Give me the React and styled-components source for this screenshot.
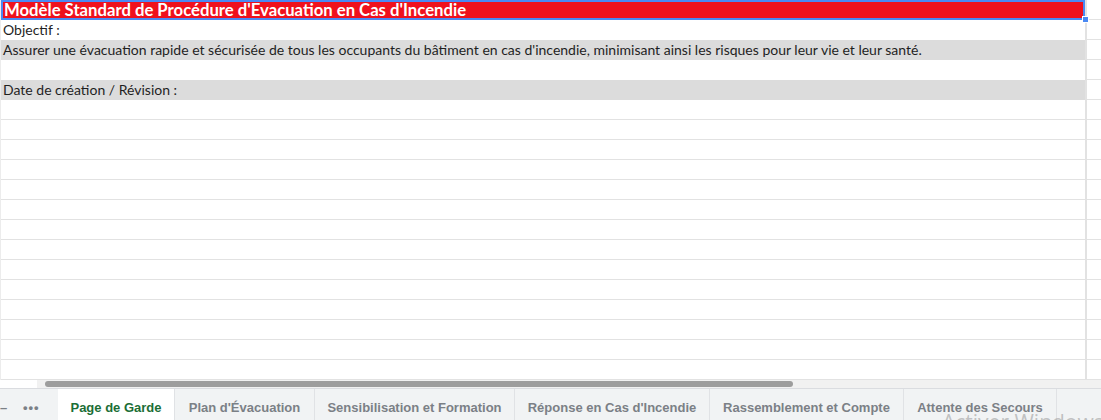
import React from 'react'
import styled, { createGlobalStyle } from 'styled-components'

const GlobalStyle = createGlobalStyle`
    html, body {
        margin: 0;
        padding: 0;
        width: 1101px;
        height: 420px;
        overflow: hidden;
        background: #ffffff;
    }
    * { box-sizing: border-box; }
`

const Screen = styled.div`
    position: relative;
    display: flex;
    flex-direction: column;
    width: 1101px;
    height: 420px;
    overflow: hidden;
`

const Grid = styled.div`
    display: flex;
    flex-direction: column;
    border-left: 1px solid #ececec;
`

const Row = styled.div`
    display: grid;
    grid-template-columns: 1084px 1fr;
    height: 20px;
`

const MainCell = styled.div`
    position: relative;
    height: 20px;
    padding: 0 2px;
    display: flex;
    align-items: flex-end;
    font-family: Lato, "Open Sans", sans-serif;
    font-size: 14px;
    line-height: 18px;
    color: #1f1f1f;
    white-space: nowrap;
    background: ${p => p.$fill || 'transparent'};
    border-bottom: 1px solid ${p => (p.$line ? '#e2e2e2' : 'transparent')};
`

const TitleCell = styled(MainCell)`
    background: #ef111d;
    color: #ffffff;
    font-weight: 700;
    font-size: 16.7px;
    line-height: 18px;
    align-items: center;
    border: 2px solid #4a89f3;
    padding: 0 1px;
`

const Handle = styled.span`
    position: absolute;
    right: -6px;
    bottom: -5px;
    width: 7px;
    height: 7px;
    background: #4a89f3;
    border: 1px solid #ffffff;
`

const SideCell = styled.div`
    height: 20px;
    border-left: 2px solid #e2e2e2;
    border-bottom: 1px solid #e2e2e2;
`

const ScrollRow = styled.div`
    display: flex;
    height: 8px;
    background: #ffffff;
`

const ScrollTrack = styled.div`
    flex: 1;
    margin-left: 37px;
    padding: 1px 8px;
    background: #f1f1f1;
`

const ScrollThumb = styled.div`
    width: 748px;
    height: 6px;
    border-radius: 4px;
    background: #9d9d9d;
`

const TabBar = styled.div`
    display: flex;
    height: 40px;
    background: #f1f3f4;
    border-top: 1px solid #dadce0;
    font-family: "Liberation Sans", Arial, sans-serif;
    font-weight: 700;
    font-size: 13px;
`

const BarTool = styled.div`
    display: flex;
    align-items: flex-start;
    width: ${p => p.$w}px;
    height: 100%;
    padding: 11px 0 0 ${p => p.$pad || 0}px;
    color: #7b8086;
    letter-spacing: 1px;
`

const Tab = styled.div`
    display: flex;
    align-items: flex-start;
    padding: 11px 0 0;
    justify-content: center;
    width: ${p => p.$w}px;
    height: 100%;
    color: ${p => (p.$active ? '#1b6e36' : '#7b8086')};
    background: ${p => (p.$active ? '#ffffff' : 'transparent')};
    border-right: 1px solid #e0e2e5;
    white-space: nowrap;
`

const Watermark = styled.div`
    position: absolute;
    left: 942px;
    top: 408px;
    font-family: "Open Sans", sans-serif;
    font-size: 21px;
    color: rgba(150, 150, 150, 0.55);
    white-space: nowrap;
`

const rows = [
    { text: 'Objectif :' },
    { text: "Assurer une évacuation rapide et sécurisée de tous les occupants du bâtiment en cas d'incendie, minimisant ainsi les risques pour leur vie et leur santé.", fill: '#dcdcdc' },
    { text: '' },
    { text: 'Date de création / Révision :', fill: '#dcdcdc' },
]

const tabs = [
    { name: 'Page de Garde', w: 117, active: true },
    { name: "Plan d'Évacuation", w: 140 },
    { name: 'Sensibilisation et Formation', w: 200 },
    { name: "Réponse en Cas d'Incendie", w: 195 },
    { name: 'Rassemblement et Compte', w: 194 },
    { name: 'Attente des Secours', w: 153 },
]

const App = () => {
    const emptyRows = Array.from({ length: 14 })

    return (
        <Screen>
            <GlobalStyle />
            <Grid>
                <Row>
                    <TitleCell>
                        Modèle Standard de Procédure d'Evacuation en Cas d'Incendie
                        <Handle />
                    </TitleCell>
                    <SideCell />
                </Row>
                {rows.map((r, i) => (
                    <Row key={i}>
                        <MainCell $fill={r.fill}>{r.text}</MainCell>
                        <SideCell />
                    </Row>
                ))}
                {emptyRows.map((_, i) => (
                    <Row key={'e' + i}>
                        <MainCell $line />
                        <SideCell />
                    </Row>
                ))}
            </Grid>
            <ScrollRow>
                <ScrollTrack>
                    <ScrollThumb />
                </ScrollTrack>
            </ScrollRow>
            <TabBar>
                <BarTool $w={12}>–</BarTool>
                <BarTool $w={46} $pad={11}>•••</BarTool>
                {tabs.map(t => (
                    <Tab key={t.name} $w={t.w} $active={t.active}>{t.name}</Tab>
                ))}
            </TabBar>
            <Watermark>Activer Windows</Watermark>
        </Screen>
    )
}

export default App
